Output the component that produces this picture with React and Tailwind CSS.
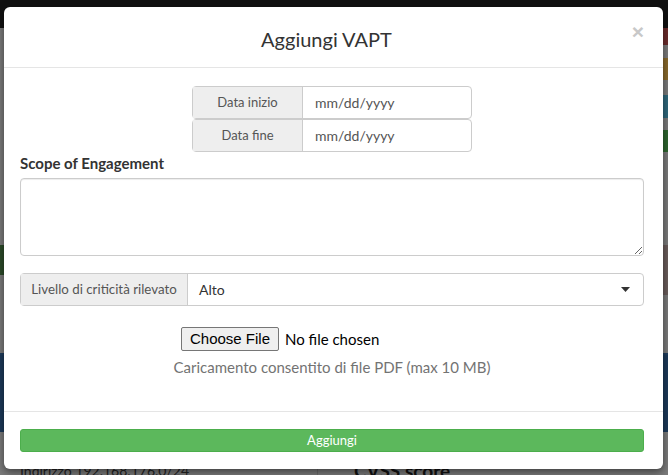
import React from 'react';

// Aggiungi VAPT modal over a dimmed page

const RIGHT_BADGES = [
  { h: 17, c: 'bg-[#6b2b2b]' },
  { h: 13, c: 'bg-[#7b7b7b]' },
  { h: 22, c: 'bg-[#8a6a2c]' },
  { h: 15, c: 'bg-[#7b7b7b]' },
  { h: 23, c: 'bg-[#2f687c]' },
  { h: 12, c: 'bg-[#7b7b7b]' },
  { h: 22, c: 'bg-[#2e662f]' },
];

function DateRow({ label }) {
  return (
    <div className="flex h-[33px] w-[280px] rounded-[4px] border border-[#ccc] bg-white">
      <div className="flex w-[110px] items-center justify-center border-r border-[#ccc] bg-[#eee] text-[13px] text-[#555]">
        {label}
      </div>
      <div className="flex flex-1 items-center px-3 text-[14px] text-[#555]">mm/dd/yyyy</div>
    </div>
  );
}

export default function App() {
  return (
    <div className="relative h-[475px] w-[668px] overflow-hidden bg-[#7b7b7b]" style={{ fontFamily: 'Lato, "Open Sans", sans-serif' }}>
      {/* page behind the backdrop */}
      <div className="flex h-full flex-col">
        <div className="h-[28px] bg-[#111]" />
        <div className="flex h-[217px]">
          <div className="flex-1" />
          <div className="flex w-[6px] flex-col">
            {RIGHT_BADGES.map((b, i) => (
              <div key={i} className={b.c} style={{ height: b.h }} />
            ))}
          </div>
        </div>
        <div className="flex h-[50px]">
          <div className="flex w-[4px] flex-col">
            <div className="h-[30px] bg-[#2c4b29]" />
          </div>
          <div className="flex-1" />
          <div className="w-[6px] bg-[#6a5d5b]" />
        </div>
        <div className="h-[58px]" />
        <div className="h-[2px] bg-[#1f3d5e]" />
        <div className="h-[77px] bg-[#1c3a5a]" />
        <div className="flex flex-1">
          <div className="flex w-[318px] flex-col justify-end border-r border-[#6a6a6a] pl-[20px] text-[14px] text-[#222]">
            <span className="translate-y-[6px]">Indirizzo 192.168.176.0/24</span>
          </div>
          <div className="flex flex-1 flex-col justify-end pl-[36px] text-[19px] font-bold text-[#111]">
            <span className="translate-y-[10px]">CVSS score</span>
          </div>
        </div>
      </div>

      {/* modal */}
      <div className="absolute left-[4px] top-[7px] w-[659px] rounded-[6px] bg-white text-[#333] shadow-[0_3px_9px_rgba(0,0,0,0.5)]">
        <div className="relative flex h-[61px] items-center justify-center border-b border-[#e5e5e5] pr-[14px] pt-[3px]">
          <h4 className="text-[20px] text-[#333]">Aggiungi VAPT</h4>
          <span className="absolute right-[19px] top-[14px] text-[21px] font-bold leading-none text-[#c8c8c8]" style={{ fontFamily: '"Liberation Sans", sans-serif' }}>
            ×
          </span>
        </div>

        <div className="flex h-[343px] flex-col pl-[16px] pr-[19px] pt-[18px]">
          <div className="flex flex-col items-center">
            <DateRow label="Data inizio" />
            <DateRow label="Data fine" />
          </div>

          <label className="mt-[1px] text-[15px] font-bold leading-[20px] text-[#333]">Scope of Engagement</label>
          <textarea className="mt-[5px] h-[78px] w-full resize-y rounded-[4px] border border-[#ccc] bg-white shadow-[inset_0_1px_1px_rgba(0,0,0,0.075)] outline-none" />

          <div className="mt-[17px] flex h-[33px] w-full rounded-[4px] border border-[#ccc]">
            <div className="flex w-[167px] items-center justify-center border-r border-[#ccc] bg-[#eee] text-[13.3px] text-[#555]">
              Livello di criticità rilevato
            </div>
            <div className="flex flex-1 items-center justify-between pl-[11px] pr-[13px] text-[14px] text-[#333]">
              <span>Alto</span>
              <svg width="9" height="5" viewBox="0 0 9 5">
                <path d="M0 0h9L4.5 5z" fill="#333" />
              </svg>
            </div>
          </div>

          <div className="mt-[21px] flex justify-center">
            <div className="flex w-[302px] items-center">
              <span
                className="flex h-[24px] w-[98px] items-center justify-center rounded-[2px] border border-[#767676] bg-[#efefef] text-[15px] text-black"
                style={{ fontFamily: '"Liberation Sans", Arial, sans-serif' }}
              >
                Choose File
              </span>
              <span className="ml-[6px] text-[15px] text-black">No file chosen</span>
            </div>
          </div>
          <p className="mt-[5px] text-center text-[15px] text-[#737373]">Caricamento consentito di file PDF (max 10 MB)</p>
        </div>

        <div className="border-t border-[#e5e5e5] pb-[17px] pl-[16px] pr-[19px] pt-[17px]">
          <button className="flex h-[23px] w-full items-center justify-center rounded-[3px] border border-[#4cae4c] bg-[#5cb85c] text-[13px] text-white">
            Aggiungi
          </button>
        </div>
      </div>
    </div>
  );
}
